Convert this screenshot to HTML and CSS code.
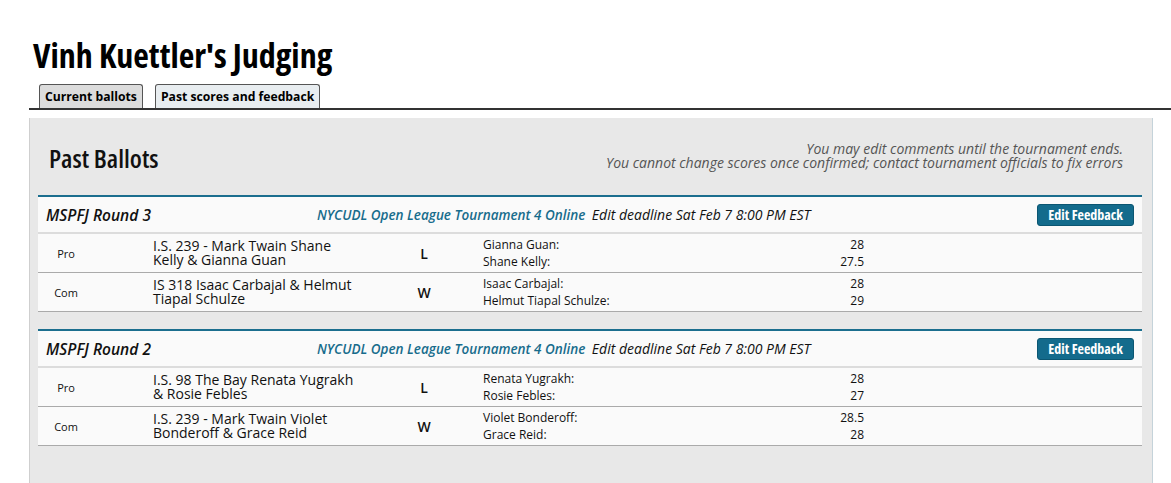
FILE: index.html
```html
<!DOCTYPE html>
<html>
<head>
<meta charset="utf-8">
<link rel="stylesheet" href="styles.css">
</head>
<body>
<div class="page">
  <h1 class="title">Vinh Kuettler's Judging</h1>
  <div class="tabs">
    <div class="tab">Current ballots</div>
    <div class="tab active">Past scores and feedback</div>
  </div>
  <div class="panel">
    <div class="panel-head">
      <h2 class="panel-title">Past Ballots</h2>
      <div class="notes">
        <div>You may edit comments until the tournament ends.</div>
        <div>You cannot change scores once confirmed; contact tournament officials to fix errors</div>
      </div>
    </div>

    <div class="card">
      <div class="card-head">
        <div class="round">MSPFJ Round 3</div>
        <div class="tourn"><span class="tname">NYCUDL Open League Tournament 4 Online</span> <span class="deadline">Edit deadline Sat Feb 7 8:00 PM EST</span></div>
        <div class="btn">Edit Feedback</div>
      </div>
      <div class="row">
        <div class="side">Pro</div>
        <div class="team">I.S. 239 - Mark Twain Shane Kelly &amp; Gianna Guan</div>
        <div class="result">L</div>
        <div class="scores">
          <div class="score"><span>Gianna Guan:</span><span>28</span></div>
          <div class="score"><span>Shane Kelly:</span><span>27.5</span></div>
        </div>
      </div>
      <div class="row">
        <div class="side">Com</div>
        <div class="team">IS 318 Isaac Carbajal &amp; Helmut Tiapal Schulze</div>
        <div class="result">W</div>
        <div class="scores">
          <div class="score"><span>Isaac Carbajal:</span><span>28</span></div>
          <div class="score"><span>Helmut Tiapal Schulze:</span><span>29</span></div>
        </div>
      </div>
    </div>

    <div class="card">
      <div class="card-head">
        <div class="round">MSPFJ Round 2</div>
        <div class="tourn"><span class="tname">NYCUDL Open League Tournament 4 Online</span> <span class="deadline">Edit deadline Sat Feb 7 8:00 PM EST</span></div>
        <div class="btn">Edit Feedback</div>
      </div>
      <div class="row">
        <div class="side">Pro</div>
        <div class="team">I.S. 98 The Bay Renata Yugrakh &amp; Rosie Febles</div>
        <div class="result">L</div>
        <div class="scores">
          <div class="score"><span>Renata Yugrakh:</span><span>28</span></div>
          <div class="score"><span>Rosie Febles:</span><span>27</span></div>
        </div>
      </div>
      <div class="row">
        <div class="side">Com</div>
        <div class="team">I.S. 239 - Mark Twain Violet Bonderoff &amp; Grace Reid</div>
        <div class="result">W</div>
        <div class="scores">
          <div class="score"><span>Violet Bonderoff:</span><span>28.5</span></div>
          <div class="score"><span>Grace Reid:</span><span>28</span></div>
        </div>
      </div>
    </div>
  </div>
</div>
</body>
</html>
```

FILE: styles.css
```css
html, body {
  margin: 0;
  padding: 0;
  background: #ffffff;
}
body {
  font-family: "Open Sans", "DejaVu Sans", sans-serif;
  color: #111;
  overflow: hidden;
}
.page {
  padding: 30px 0 0 29px;
}
.title {
  margin: 0 0 0 4px;
  font-family: "Open Sans", sans-serif;
  font-stretch: 75%;
  font-weight: bold;
  font-size: 34px;
  line-height: 50px;
  color: #000;
}
.tabs {
  display: flex;
  gap: 12px;
  padding-left: 10px;
  margin-top: 4px;
  border-bottom: 2px solid #333;
  height: 24px;
  align-items: flex-end;
}
.tab {
  height: 24px;
  box-sizing: border-box;
  border: 1px solid #555;
  border-bottom: none;
  border-radius: 3px 3px 0 0;
  background: #dcdcdc;
  font-size: 12.2px;
  font-weight: bold;
  line-height: 23px;
  padding: 0 5px;
  color: #000;
}
.tab.active {
  background: #e8edf0;
}
.panel {
  margin-top: 8px;
  width: 1104px;
  height: 400px;
  background: #e8e8e8;
  border-left: 1px solid #cfcfcf;
  border-right: 1px solid #c5d3da;
  padding: 0 10px 0 8px;
}
.panel-head {
  display: flex;
  justify-content: space-between;
  align-items: flex-start;
  padding: 24px 19px 0 11px;
  height: 53px;
}
.panel-title {
  margin: 0;
  padding-top: 1px;
  font-family: "Open Sans", sans-serif;
  font-stretch: 75%;
  font-weight: 600;
  font-size: 26px;
  line-height: 30px;
  color: #111;
}
.notes {
  text-align: right;
  font-style: italic;
  font-size: 14px;
  line-height: 14px;
  color: #555;
}
.card {
  background: #fafafa;
  border-top: 2px solid #1b6e8e;
  margin-bottom: 17px;
}
.card-head {
  display: flex;
  align-items: center;
  height: 35px;
  border-bottom: 2px solid #dcdcdc;
  padding: 0 8px;
}
.round {
  width: 271px;
  font-style: italic;
  font-weight: 600;
  font-size: 15.5px;
}
.tourn {
  flex: 1;
  font-style: italic;
  font-size: 13.5px;
}
.tname {
  color: #176c8c;
  font-weight: 600;
}
.deadline {
  color: #111;
  margin-left: 3px;
  font-size: 14px;
}
.btn {
  background: #136b8c;
  border: 1px solid #0b5672;
  border-radius: 3px;
  color: #fff;
  font-family: "Open Sans", sans-serif;
  font-stretch: 75%;
  font-weight: bold;
  font-size: 14px;
  height: 20px;
  line-height: 20px;
  padding: 0 10px;
}
.row {
  display: flex;
  align-items: center;
  height: 38px;
  border-bottom: 1px solid #aaa;
}
.side {
  width: 56px;
  text-align: center;
  font-size: 11px;
}
.team {
  margin-left: 59px;
  width: 205px;
  font-size: 14px;
  line-height: 14px;
}
.result {
  width: 118px;
  padding-left: 7px;
  text-align: center;
  font-size: 14px;
  font-weight: 600;
}
.scores {
  width: 381px;
  font-size: 12px;
  line-height: 17px;
}
.score {
  display: flex;
  justify-content: space-between;
}
```
